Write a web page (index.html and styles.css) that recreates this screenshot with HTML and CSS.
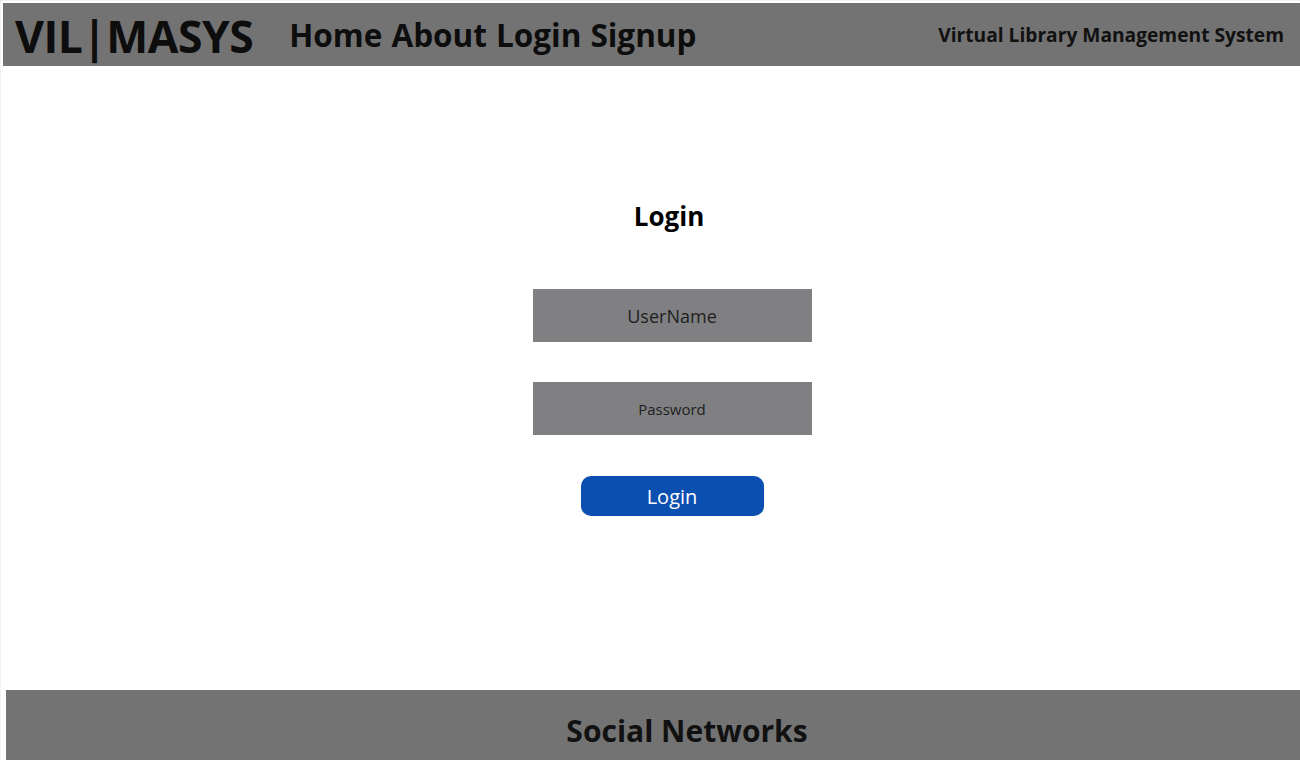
FILE: index.html
```html
<!DOCTYPE html>
<html lang="en">
<head>
<meta charset="utf-8">
<title>VIL|MASYS - Login</title>
<link rel="stylesheet" href="styles.css">
</head>
<body>
<div class="page">
  <header class="topbar">
    <div class="brand">VIL|MASYS</div>
    <nav class="nav">
      <a href="#">Home</a>
      <a href="#">About</a>
      <a href="#">Login</a>
      <a href="#">Signup</a>
    </nav>
    <div class="tagline">Virtual Library Management System</div>
  </header>
  <main class="main">
    <form class="login-form">
      <h1 class="login-title">Login</h1>
      <input class="field field-user" type="text" placeholder="UserName">
      <input class="field field-pass" type="password" placeholder="Password">
      <button class="login-btn" type="button">Login</button>
    </form>
  </main>
  <footer class="footer">
    <h2 class="footer-title">Social Networks</h2>
  </footer>
</div>
</body>
</html>
```
FILE: styles.css
```css
* { box-sizing: border-box; }
html, body { margin: 0; padding: 0; background: #fff; }
body {
  font-family: "Open Sans", "Noto Sans", sans-serif;
  color: #111;
  overflow: hidden;
}
.page {
  width: 1300px;
  height: 760px;
  padding: 3px 0 0 3px;
  border-top: 1px dotted #e6e6e6;
  border-left: 1px dotted #e6e6e6;
  display: flex;
  flex-direction: column;
}
.topbar {
  height: 63px;
  margin-top: -1px;
  margin-left: -1px;
  background: #737373;
  display: flex;
  align-items: center;
  padding: 0 16px 0 12px;
}
.brand {
  font-size: 44.5px;
  font-weight: 700;
  letter-spacing: -0.5px;
  color: #0d0d0d;
  line-height: 63px;
  margin-top: 2px;
}
.nav {
  display: flex;
  gap: 9px;
  margin-left: 36px;
}
.nav a {
  font-size: 31.5px;
  font-weight: 700;
  color: #0d0d0d;
  text-decoration: none;
  line-height: 40px;
}
.tagline {
  margin-left: auto;
  font-size: 19.2px;
  font-weight: 700;
  color: #111;
}
.main {
  flex: 1;
  display: flex;
  justify-content: center;
  padding-left: 40px;
}
.login-form {
  display: flex;
  flex-direction: column;
  align-items: center;
  padding-top: 133px;
}
.login-title {
  margin: 0 6px 0 0;
  font-size: 26px;
  font-weight: 700;
  line-height: 34px;
  color: #000;
}
.field {
  width: 279px;
  height: 53px;
  border: none;
  background: #808083;
  text-align: center;
  font-family: "Open Sans", "Noto Sans", sans-serif;
  color: #222;
  outline: none;
}
.field::placeholder { color: #1e1e1e; opacity: 1; }
.field-user { margin-top: 56px; font-size: 18px; }
.field-pass { margin-top: 40px; font-size: 15px; }
.login-btn {
  margin-top: 41px;
  width: 183px;
  height: 40px;
  border: none;
  border-radius: 10px;
  background: #0b4fb1;
  color: #fff;
  font-family: "Open Sans", "Noto Sans", sans-serif;
  font-size: 20px;
  padding: 0;
}
.footer {
  height: 70px;
  margin-left: 2px;
  background: #737373;
  display: flex;
  justify-content: center;
  padding-left: 68px;
}
.footer-title {
  margin: 0;
  font-size: 30px;
  font-weight: 700;
  line-height: 82px;
  color: #111;
}
```
